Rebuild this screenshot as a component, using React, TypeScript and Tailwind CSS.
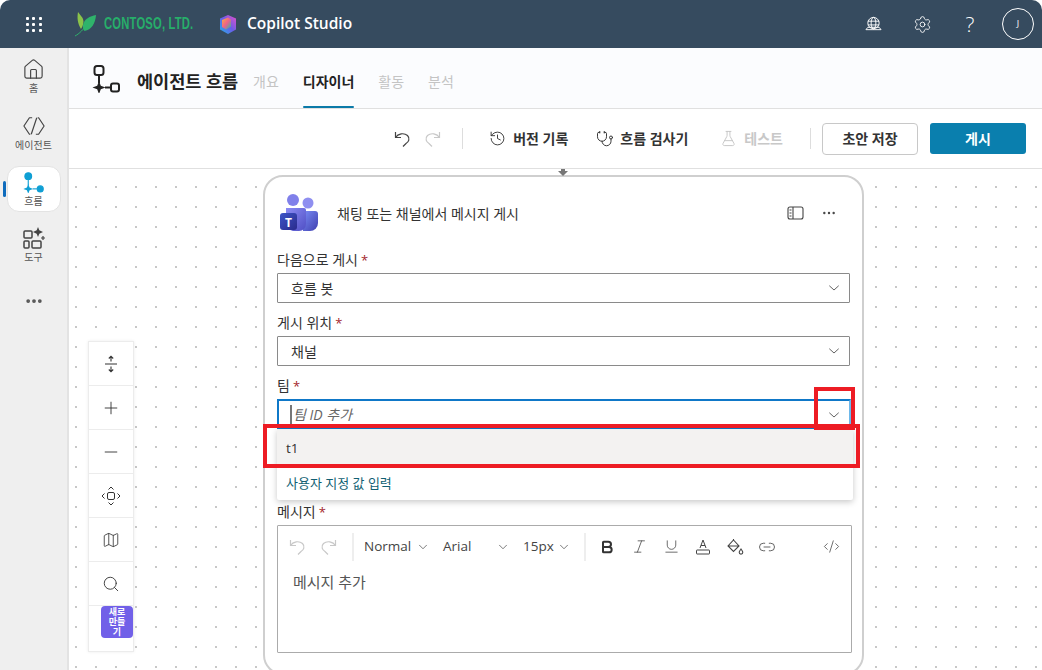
import React from "react";
import { ChevronDown, Settings, History, Stethoscope, FlaskConical, Plus, Minus, Map as MapIcon, Search, Bold, Italic, Underline, Link2, CodeXml, Home, MoreHorizontal } from "lucide-react";

const FONT = "font-['Open_Sans','Noto_Sans_CJK_KR',sans-serif]";

function FlowGlyph({ size = 28, color = "#222", fill = false }: { size?: number; color?: string; fill?: boolean }) {
  return (
    <svg width={size} height={size} viewBox="0 0 28 28" fill="none" stroke={color} strokeWidth={fill ? 1.5 : 2}>
      <rect x="2.500" y="1" width="9" height="9" rx={fill ? 4.5 : 2.5} fill={fill ? color : "none"} />
      <path d="M7 10v8" />
      <path d="M7 16l1.800 4.700 4.700 1.800-4.700 1.800L7 29l-1.800-4.700L.5 22.500l4.700-1.800z" fill={color} stroke="none" />
      <path d="M13 22.500h6" />
      <rect x="19" y="18.500" width="8" height="8" rx={fill ? 4 : 2} fill={fill ? color : "none"} />
    </svg>
  );
}

function Undo({ color = "#444", flip = false, size = 18 }: { color?: string; flip?: boolean; size?: number }) {
  return (
    <svg width={size} height={size} viewBox="0 0 18 18" fill="none" stroke={color} strokeWidth="1.2" className={flip ? "-scale-x-100" : ""}>
      <path d="M2.500 2v5.500H8" />
      <path d="M2.500 7.500C5 3.500 11 2.500 14.500 5.500c3 3 1 6.500-1.500 8L10 16.500" />
    </svg>
  );
}

function NavItem({ label, active, children, pt }: { label: string; active?: boolean; children: React.ReactNode; pt: string }) {
  return (
    <div className={`relative w-[54px] h-[46px] rounded-xl flex flex-col items-center ${pt} ${active ? "bg-white border border-[#e3e3e3]" : ""}`}>
      <div className="h-[22px] flex items-center justify-center">{children}</div>
      <span className="text-[10px] leading-[14px] text-[#555] mt-px">{label}</span>
    </div>
  );
}

function Req() {
  return <span className="text-[#a4262c] ml-[3px] text-[13px]">*</span>;
}

function Label({ children }: { children: React.ReactNode }) {
  return <div className="h-5 leading-[22px] text-[14px] text-[#333] mb-1">{children}</div>;
}

function Select({ value }: { value: string }) {
  return (
    <div className="h-[30px] w-[573px] border border-[#8a8a8a] rounded-[1px] flex items-center justify-between pl-[13px] pr-[7px]">
      <span className="text-[14px] text-[#333]">{value}</span>
      <ChevronDown size={16} strokeWidth={1.2} color="#444" className="w-[16px] scale-x-[1.100]" />
    </div>
  );
}

function ZoomCell({ children, last }: { children: React.ReactNode; last?: boolean }) {
  return <div className={`h-[44px] flex items-center justify-center text-[#333] ${last ? "" : "border-b border-[#ececec]"}`}>{children}</div>;
}

function Sep({ className = "" }: { className?: string }) {
  return <div className={`w-px h-[21px] bg-[#ddd] ${className}`} />;
}

function ToolBtn({ children, w = "w-[32px]" }: { children: React.ReactNode; w?: string }) {
  return <div className={`${w} h-full flex items-center justify-center shrink-0`}>{children}</div>;
}

function FontSel({ value, w }: { value: string; w: string }) {
  return (
    <div className={`${w} flex items-center justify-between shrink-0`}>
      <span className="text-[13.500px] text-[#444]">{value}</span>
      <ChevronDown size={14} strokeWidth={1.200} color="#444" />
    </div>
  );
}

export default function App() {
  return (
    <div className={`relative w-[1042px] h-[670px] overflow-hidden bg-white flex flex-col ${FONT}`}>
      {/* top bar */}
      <header className="h-[48px] shrink-0 bg-[#364b5f] rounded-t-[10px] flex items-center text-white">
        <div className="ml-[26px] w-[16px] grid grid-cols-3 gap-[3px]">
          {Array.from({ length: 9 }).map((_, i) => (
            <span key={i} className="w-[3px] h-[3px] bg-white rounded-[1px]" />
          ))}
        </div>
        <svg width="22" height="25" viewBox="0 0 22 25" className="ml-[33px]">
          <path d="M3 0c-1 6-.5 11 3 17 2.500-4 3-7 2-10C7.500 5 5 3 3 0z" fill="#8bc34a" />
          <path d="M21 3C15 4 9 7 8 13c-.5 3 .5 5 1.500 6 7-1 11-8 11.500-16z" fill="#2fb36b" />
          <path d="M0 24c4-2 9-7 13-13" stroke="#2fb36b" strokeWidth="1" fill="none" />
        </svg>
        <div className="ml-[7px] w-[91px] shrink-0 overflow-visible">
          <span className="inline-block origin-left scale-x-[0.66] font-['Liberation_Sans',sans-serif] font-bold text-[17px] tracking-[0.3px] text-[#27ae6a] whitespace-nowrap">CONTOSO, LTD.</span>
        </div>
        <svg width="18" height="19" viewBox="0 0 18 19" className="ml-[24px] shrink-0">
          <defs>
            <linearGradient id="cp1" x1="0" y1="1" x2="1" y2="0">
              <stop offset="0" stopColor="#1fb6e8" />
              <stop offset="0.5" stopColor="#6a5ce8" />
              <stop offset="1" stopColor="#e84fc8" />
            </linearGradient>
            <linearGradient id="cp2" x1="0" y1="0" x2="1" y2="1">
              <stop offset="0" stopColor="#f7b23b" />
              <stop offset="0.5" stopColor="#f0608a" />
              <stop offset="1" stopColor="#17c3a6" />
            </linearGradient>
          </defs>
          <path d="M9 0l8 3.500v11L9 19l-8-4.500v-11z" fill="url(#cp1)" />
          <path d="M3 5l6-2.500 3 2v7l-5 3-4-2.500z" fill="url(#cp2)" />
        </svg>
        <span className="ml-[10px] text-[15.500px] font-semibold text-white">Copilot Studio</span>
        <div className="ml-auto flex items-center">
          <svg width="17" height="18" viewBox="0 0 18 18" fill="none" stroke="#fff" strokeWidth="1">
            <circle cx="9" cy="8" r="6" />
            <ellipse cx="9" cy="8" rx="2.500" ry="6" />
            <path d="M3 6h12M3 10h12M1 15l2-2.500h12l2 2.500z" />
          </svg>
          <Settings size={19} strokeWidth={1.100} color="#fff" className="ml-[31px]" />
          <span className="ml-[31px] w-[14px] text-center text-[21px] font-light leading-none">?</span>
          <div className="ml-[25px] mr-[8px] w-[32px] h-[32px] rounded-full border border-white flex items-center justify-center text-[9px]">J</div>
        </div>
      </header>

      <div className="flex-1 flex min-h-0">
        {/* sidebar */}
        <aside className="relative w-[69px] shrink-0 bg-[#efefef] border-r-2 border-[#e3e3e3] flex flex-col items-center gap-[10px] pt-[6px]">
          <NavItem label="홈" pt="pt-[4px]">
            <Home size={23} strokeWidth={1.200} color="#444" />
          </NavItem>
          <NavItem label="에이전트" pt="pt-[5px]">
            <svg width="22" height="20" viewBox="0 0 24 20" fill="none" stroke="#444" strokeWidth="1.300" strokeLinejoin="round">
              <path d="M10 1H7L1 10l6 9h1M14 19h3l6-9-6-9h-1M15 1L9 19" />
            </svg>
          </NavItem>
          <NavItem label="흐름" active pt="pt-[4px]">
            <FlowGlyph size={21} color="#0f9fd4" fill />
          </NavItem>
          <NavItem label="도구" pt="pt-[5px]">
            <svg width="22" height="22" viewBox="0 0 22 22" fill="none" stroke="#444" strokeWidth="1.500">
              <rect x="1" y="4" width="8" height="7" rx="1" />
              <rect x="1" y="14" width="5" height="7" rx="1" />
              <rect x="9" y="14" width="9" height="7" rx="1" />
              <path d="M15 0l1.300 3.200L20 5l-3.700 1.800L15 10l-1.300-3.200L10 5l3.700-1.800z" fill="#444" stroke="none" />
              <path d="M20 9v4M18 11h4" strokeWidth="1.200" />
            </svg>
          </NavItem>
          <div className="h-[46px] flex items-center justify-center">
            <MoreHorizontal size={20} strokeWidth={2.500} color="#555" />
          </div>
          <div className="absolute left-[3px] top-[133px] w-[3px] h-[16px] rounded-full bg-[#0f6cbd]" />
        </aside>

        <main className="flex-1 min-w-0 flex flex-col">
          {/* page header */}
          <div className="h-[61px] shrink-0 bg-[#fbfcfe] border-b border-[#e0e0e0] flex items-center">
            <div className="ml-[23px] mt-[2px]">
              <FlowGlyph />
            </div>
            <span className="ml-[17px] w-[100px] pt-[6px] text-[17.500px] font-bold text-[#222] whitespace-nowrap">에이전트 흐름</span>
            <nav className="ml-[16px] h-full flex items-center gap-[24px] text-[14px]">
              <span className="text-[#c4c4c4] pt-[6px]">개요</span>
              <span className="relative h-full flex items-center font-bold text-[#222] pt-[6px]">
                디자이너
                <span className="absolute left-0 right-0 bottom-0 h-[2px] bg-[#0b7aa8] rounded-full" />
              </span>
              <span className="text-[#c4c4c4] pt-[6px]">활동</span>
              <span className="text-[#c4c4c4] pt-[6px]">분석</span>
            </nav>
          </div>

          {/* toolbar */}
          <div className="h-[60px] shrink-0 bg-white border-b border-[#e0e0e0] flex items-center justify-end pr-[16px]">
            <Undo />
            <div className="ml-[13px]"><Undo color="#c8c8c8" flip /></div>
            <Sep className="ml-[20px]" />
            <History size={17} strokeWidth={1.300} color="#333" className="ml-[26px]" />
            <span className="ml-[7px] text-[14px] font-bold text-[#333] whitespace-nowrap">버전 기록</span>
            <Stethoscope size={18} strokeWidth={1.300} color="#333" className="ml-[28px]" />
            <span className="ml-[6px] text-[14px] font-bold text-[#333] whitespace-nowrap">흐름 검사기</span>
            <FlaskConical size={17} strokeWidth={1.300} color="#c4c4c4" className="ml-[32px]" />
            <span className="ml-[7px] text-[14px] font-bold text-[#c8c8c8] whitespace-nowrap">테스트</span>
            <Sep className="ml-[27px]" />
            <button className="ml-[11px] w-[96px] h-[32px] rounded-[4px] border border-[#c8c8c8] bg-white text-[14px] font-bold text-[#333]">초안 저장</button>
            <button className="ml-[12px] w-[96px] h-[31px] rounded-[3px] bg-[#0a7fae] text-[14px] font-bold text-white">게시</button>
          </div>

          {/* canvas */}
          <div className="relative flex-1 min-h-0 overflow-hidden bg-white bg-[radial-gradient(circle,#c6c6c6_0.7px,transparent_1.1px)] bg-[length:20px_20px] bg-[position:-3px_8px]">
            {/* zoom controls */}
            <div className="absolute left-[19px] top-[172px] w-[46px] h-[311px] bg-white border border-[#ececec] shadow-[0_0_3px_rgba(0,0,0,0.08)]">
              <ZoomCell>
                <svg width="18" height="18" viewBox="0 0 18 18" fill="none" stroke="#333" strokeWidth="1.100">
                  <path d="M3 9h12M9 1.500v5M9 11.500v5M6.800 3.500L9 1.300l2.200 2.200M6.800 14.500L9 16.700l2.200-2.200" />
                </svg>
              </ZoomCell>
              <ZoomCell><Plus size={20} strokeWidth={1.100} /></ZoomCell>
              <ZoomCell><Minus size={20} strokeWidth={1.100} /></ZoomCell>
              <ZoomCell>
                <svg width="20" height="20" viewBox="0 0 20 20" fill="none" stroke="#333" strokeWidth="1">
                  <rect x="6.500" y="6.500" width="7" height="7" rx="1.500" />
                  <path d="M7.500 3.500L10 1l2.500 2.500M7.500 16.500L10 19l2.500-2.500M3.500 7.500L1 10l2.500 2.500M16.500 7.500L19 10l-2.500 2.500" />
                </svg>
              </ZoomCell>
              <ZoomCell><MapIcon size={18} strokeWidth={1.100} /></ZoomCell>
              <ZoomCell><Search size={18} strokeWidth={1.200} /></ZoomCell>
              <ZoomCell last>
                <span />
              </ZoomCell>
              <div className="absolute left-[12px] top-[264px] w-[32px] h-[32px] rounded-[4px] bg-[#7160e8] text-white text-[9px] font-bold leading-[10px] text-center pt-[1px]">
                새로<br />만들<br />기
              </div>
            </div>

            {/* card */}
            <div className="relative ml-[194px] mt-[6px] w-[601px] h-[500px] bg-white border-2 border-[#cfcfcf] rounded-[20px] px-[12px]">
              <svg width="14" height="9" viewBox="0 0 14 9" className="absolute left-[291px] -top-[9px]" fill="#777">
                <path d="M5 0h4v3h3L7 8 2 3h3z" />
              </svg>
              <div className="h-[72px] flex items-center justify-between">
                <div className="flex items-center">
                  <svg width="40" height="40" viewBox="0 0 40 40" className="ml-[1px]">
                    <defs>
                      <linearGradient id="t1" x1="0" y1="0" x2="1" y2="1">
                        <stop offset="0" stopColor="#8c8cf5" />
                        <stop offset="1" stopColor="#4f4fc4" />
                      </linearGradient>
                      <linearGradient id="t2" x1="0" y1="0" x2="1" y2="1">
                        <stop offset="0" stopColor="#7a8cf5" />
                        <stop offset="1" stopColor="#3f3fb0" />
                      </linearGradient>
                      <linearGradient id="t3" x1="0" y1="0" x2="1" y2="1">
                        <stop offset="0" stopColor="#3d56c8" />
                        <stop offset="1" stopColor="#2a2a8c" />
                      </linearGradient>
                    </defs>
                    <circle cx="15" cy="7" r="6" fill="#8080ea" />
                    <circle cx="30" cy="10" r="5.500" fill="#8f8ff0" />
                    <path d="M25 18h12a3 3 0 0 1 3 3v9a8 8 0 0 1-8 8h-7z" fill="url(#t2)" />
                    <path d="M8 15h18a2 2 0 0 1 2 2v14a7 7 0 0 1-7 7H15a8 8 0 0 1-7-8z" fill="url(#t1)" />
                    <rect x="2" y="20" width="17" height="17" rx="3" fill="url(#t3)" />
                    <text x="10.500" y="33.500" fill="#fff" fontSize="12" fontWeight="700" textAnchor="middle" fontFamily="Open Sans">T</text>
                  </svg>
                  <span className="ml-[19px] text-[14px] text-[#333]">채팅 또는 채널에서 메시지 게시</span>
                </div>
                <div className="flex items-center mr-[13px]">
                  <svg width="17" height="14" viewBox="0 0 17 14" fill="none" stroke="#444" strokeWidth="1.100">
                    <rect x="1" y="1" width="15" height="12" rx="2" />
                    <path d="M6 1v12M2.500 4h2M2.500 7h2M2.500 10h2" />
                  </svg>
                  <MoreHorizontal size={16} strokeWidth={1.600} color="#444" className="ml-[17px]" />
                </div>
              </div>

              <Label>다음으로 게시<Req /></Label>
              <Select value="흐름 봇" />
              <div className="h-[9px]" />
              <Label>게시 위치<Req /></Label>
              <Select value="채널" />
              <div className="h-[9px]" />
              <Label>팀<Req /></Label>
              <div className="relative">
                <div className="h-[31px] w-[574px] border-2 border-[#0f78c8] border-r-[#6db8ea] flex items-center justify-between pl-[11px] pr-[7px]">
                  <span className="h-[20px] border-l-2 border-[#777] pl-[1px] text-[14px] italic text-[#666] leading-[20px]">팀 ID 추가</span>
                  <ChevronDown size={16} strokeWidth={1.200} color="#444" className="scale-x-[1.100]" />
                </div>
                <div className="absolute left-0 top-[30px] w-[576px] h-[71px] bg-white shadow-[0_2px_6px_rgba(0,0,0,0.22)] z-10 rounded-b-[2px]">
                  <div className="h-[36px] bg-[#f3f2f1] flex items-center pl-[9px] pt-[3px] text-[13.500px] text-[#333]">t1</div>
                  <div className="h-[35px] flex items-center pl-[9px] pt-[3px] text-[13px] text-[#115f73]">사용자 지정 값 입력</div>
                </div>
              </div>
              <div className="h-[71px]" />
              <Label>메시지<Req /></Label>
              <div className="w-[575px] h-[128px] border border-[#ababab] rounded-[1px]">
                <div className="h-[40px] flex items-center pl-[3px] pt-[1px]">
                  <ToolBtn><Undo color="#c8c8c8" /></ToolBtn>
                  <ToolBtn><Undo color="#c8c8c8" flip /></ToolBtn>
                  <div className="ml-[7px] w-[2px] h-[28px] bg-[#eeeeee]" />
                  <div className="ml-[10px]"><FontSel value="Normal" w="w-[66px]" /></div>
                  <div className="ml-[13px]"><FontSel value="Arial" w="w-[67px]" /></div>
                  <div className="ml-[13px]"><FontSel value="15px" w="w-[48px]" /></div>
                  <div className="ml-[13px] w-[2px] h-[28px] bg-[#eeeeee]" />
                  <div className="ml-[5px] h-full flex items-center">
                    <ToolBtn><Bold size={16} strokeWidth={3} color="#333" /></ToolBtn>
                    <ToolBtn><Italic size={17} strokeWidth={1.100} color="#444" /></ToolBtn>
                    <ToolBtn><Underline size={17} strokeWidth={1.100} color="#444" /></ToolBtn>
                    <ToolBtn>
                      <svg width="16" height="16" viewBox="0 0 16 16" fill="none" stroke="#444" strokeWidth="1">
                        <path d="M5 9l3-8 3 8M6 6.500h4" />
                        <rect x="1.500" y="11" width="13" height="4" rx="0.500" />
                      </svg>
                    </ToolBtn>
                    <ToolBtn>
                      <svg width="18" height="18" viewBox="0 0 18 18" fill="none" stroke="#444" strokeWidth="1.100">
                        <path d="M7.500 2L13 8l-5.500 5.500L2 8zM2 8h11M7.500 2V1" />
                        <path d="M15 11c1 1.500 1.800 2.300 1.800 3.300a1.800 1.800 0 0 1-3.600 0c0-1 .8-1.800 1.800-3.300z" />
                      </svg>
                    </ToolBtn>
                    <ToolBtn><Link2 size={18} strokeWidth={1.100} color="#444" /></ToolBtn>
                    <div className="ml-[32px]"><ToolBtn><CodeXml size={17} strokeWidth={1.100} color="#444" /></ToolBtn></div>
                  </div>
                </div>
                <div className="pl-[15px] pt-[5px] text-[15px] text-[#555]">메시지 추가</div>
              </div>
            </div>
          </div>
        </main>
      </div>

      {/* annotation boxes */}
      <div className="absolute left-[814px] top-[387px] w-[41px] h-[43px] border-[4px] border-[#ed1c24] pointer-events-none z-20" />
      <div className="absolute left-[263px] top-[424px] w-[597px] h-[44px] border-[4px] border-[#ed1c24] pointer-events-none z-20" />
    </div>
  );
}
